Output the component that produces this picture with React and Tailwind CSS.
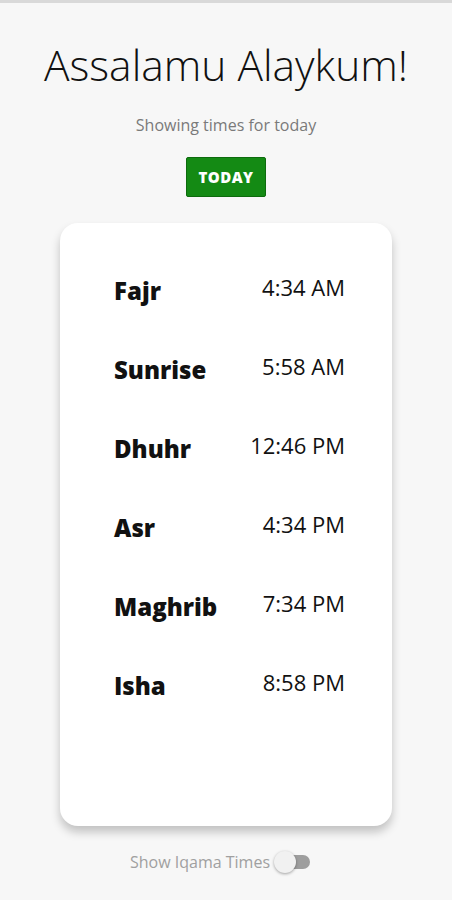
const times = [
  { name: "Fajr", time: "4:34 AM" },
  { name: "Sunrise", time: "5:58 AM" },
  { name: "Dhuhr", time: "12:46 PM" },
  { name: "Asr", time: "4:34 PM" },
  { name: "Maghrib", time: "7:34 PM" },
  { name: "Isha", time: "8:58 PM" },
];

const App = () => {
  return (
    <div className="min-h-[900px] w-full bg-[#f7f7f7] font-['Open_Sans',sans-serif] border-t-[3px] border-[#d9d9d9] flex flex-col items-center">
      <h1 className="mt-[35px] text-[42.5px] leading-[54px] font-light text-[#111]">
        Assalamu Alaykum!
      </h1>
      <p className="mt-[22px] text-[16px] leading-[22px] text-[#7a7a7a]">
        Showing times for today
      </p>
      <button className="mt-[21px] w-[80px] h-[40px] bg-[#148a14] border border-[#0d6b0d] rounded-[2px] text-white text-[15px] font-extrabold tracking-[0.5px]">
        TODAY
      </button>
      <div className="mt-[26px] w-[332px] h-[603px] bg-white rounded-[18px] shadow-[0_6px_10px_rgba(0,0,0,0.22)] flex flex-col pt-[45px] pl-[54px] pr-[47px]">
        {times.map((t) => (
          <div key={t.name} className="h-[79px] flex items-start justify-between">
            <span className="text-[24px] leading-[46px] font-extrabold text-[#111]">{t.name}</span>
            <span className="text-[22px] leading-[38px] text-[#111]">{t.time}</span>
          </div>
        ))}
      </div>
      <div className="mt-[24px] mr-[12px] flex items-center">
        <span className="text-[16px] text-[#a0a0a0]">Show Iqama Times</span>
        <div className="relative ml-[6px] w-[34px] h-[14px] rounded-full bg-[#9e9e9e]">
          <div className="absolute left-[-2px] top-[-4px] w-[22px] h-[22px] rounded-full bg-[#f1f1f1] shadow-[0_1px_3px_rgba(0,0,0,0.35)]" />
        </div>
      </div>
    </div>
  );
};

export default App;
